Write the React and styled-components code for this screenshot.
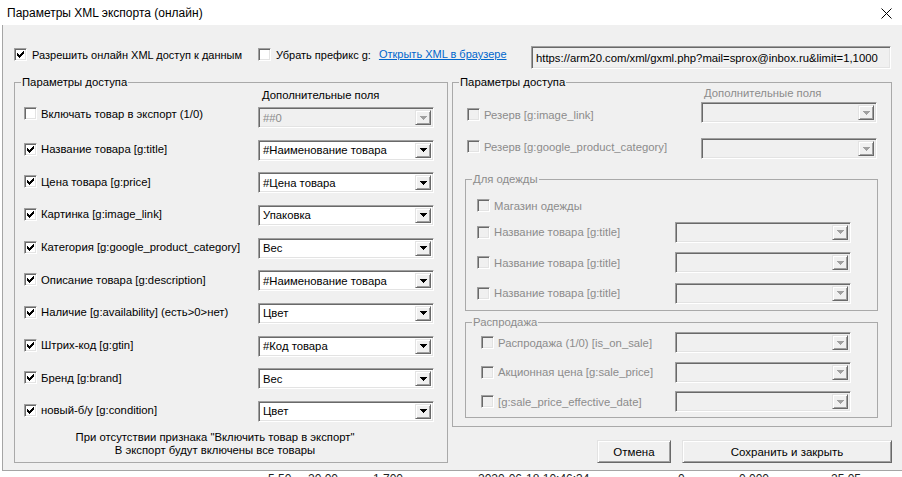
import React from "react";
import styled, { createGlobalStyle } from "styled-components";

const GlobalStyle = createGlobalStyle`
  html, body {
    margin: 0;
    padding: 0;
    background: #fff;
  }
  body {
    font-family: "Liberation Sans", "DejaVu Sans", sans-serif;
  }
`;

const Screen = styled.div`
  width: 902px;
  height: 477px;
  overflow: hidden;
  background: #fff;
`;

const TitleBar = styled.div`
  height: 25px;
  display: flex;
  align-items: center;
  justify-content: space-between;
  padding: 0 10px 0 7px;
  background: #fff;
  font-size: 12px;
  color: #000;
`;

const CloseIcon = styled.svg`
  width: 11px;
  height: 11px;
  margin-top: 2px;
`;

const Client = styled.div`
  box-sizing: border-box;
  height: 446px;
  margin-left: 2px;
  background: #f0f0f0;
  border-left: 1px solid #a5a5a5;
  border-bottom: 1px solid #a5a5a5;
  display: flex;
  flex-direction: column;
`;

const TopRow = styled.div`
  display: flex;
  align-items: flex-start;
  height: 22px;
  margin-top: 21px;
  padding-left: 11px;
  font-size: 11px;
`;

const TopCheck = styled.label`
  display: flex;
  align-items: center;
  gap: 5px;
  width: ${(p) => (p.$width ? `${p.$width}px` : "auto")};
  margin-top: 2px;
  height: 13px;
  white-space: nowrap;
`;

const Link = styled.a`
  color: #0066cc;
  text-decoration: underline;
  margin-left: ${(p) => p.$gap}px;
  margin-top: 2px;
  line-height: 13px;
  white-space: nowrap;
`;

const UrlField = styled.div`
  box-sizing: border-box;
  width: 360px;
  height: 23px;
  margin-left: auto;
  margin-right: 11px;
  display: flex;
  align-items: center;
  padding-left: 4px;
  background: #f0f0f0;
  border: 1px solid;
  border-color: #a0a0a0 #fff #fff #a0a0a0;
  box-shadow: inset 1px 1px 0 #696969, inset -1px -1px 0 #e3e3e3;
  font-size: 11.3px;
  white-space: nowrap;
  overflow: hidden;
`;

const Panels = styled.div`
  display: flex;
  margin-top: 8px;
  padding-left: 11px;
  gap: 4px;
  font-size: 11.3px;
`;

const Group = styled.fieldset`
  box-sizing: border-box;
  margin: 0;
  margin-left: ${(p) => p.$indent || 0}px;
  margin-top: ${(p) => p.$top || 0}px;
  padding: 0;
  width: ${(p) => p.$width}px;
  height: ${(p) => p.$height}px;
  border: 1px solid #a9a9a9;
  min-width: 0;
`;

const Legend = styled.legend`
  margin-left: 6px;
  padding: 0 1px;
  line-height: 13px;
  font-size: 11.3px;
  color: ${(p) => (p.$disabled ? "#8c8c8c" : "#000")};
`;

const ColumnHeader = styled.div`
  padding-left: ${(p) => p.$indent}px;
  margin-top: ${(p) => p.$top || 0}px;
  line-height: 13px;
  color: ${(p) => (p.$disabled ? "#8c8c8c" : "#000")};
`;

const RowList = styled.div`
  display: flex;
  flex-direction: column;
  gap: ${(p) => p.$gap}px;
  margin-top: ${(p) => p.$top}px;
  padding-left: ${(p) => p.$indent}px;
`;

const Row = styled.div`
  display: flex;
  align-items: flex-start;
  height: ${(p) => p.$height || 21}px;
`;

const CheckLabel = styled.label`
  display: flex;
  align-items: center;
  gap: 4px;
  width: ${(p) => (p.$width ? `${p.$width}px` : "auto")};
  height: 13px;
  margin-top: ${(p) => p.$top || 0}px;
  white-space: nowrap;
  color: ${(p) => (p.$disabled ? "#8c8c8c" : "#000")};
`;

const Box = styled.span`
  box-sizing: border-box;
  flex: none;
  width: 13px;
  height: 13px;
  display: flex;
  align-items: center;
  justify-content: center;
  background: ${(p) => (p.$disabled ? "#f0f0f0" : "#fff")};
  border: 1px solid;
  border-color: #a0a0a0 #fff #fff #a0a0a0;
  box-shadow: inset 1px 1px 0 #696969, inset -1px -1px 0 #e3e3e3;
`;

const ComboBox = styled.div`
  box-sizing: border-box;
  flex: none;
  width: 176px;
  height: 21px;
  display: flex;
  align-items: stretch;
  padding: 2px;
  background: ${(p) => (p.$disabled ? "#f0f0f0" : "#fff")};
  border: 1px solid;
  border-color: #a0a0a0 #fff #fff #a0a0a0;
  box-shadow: inset 1px 1px 0 #696969, inset -1px -1px 0 #e3e3e3;
`;

const ComboText = styled.span`
  flex: 1;
  display: flex;
  align-items: center;
  padding-left: 2px;
  white-space: nowrap;
  overflow: hidden;
  color: ${(p) => (p.$disabled ? "#8c8c8c" : "#000")};
`;

const DropButton = styled.span`
  box-sizing: border-box;
  width: 16px;
  display: flex;
  align-items: center;
  justify-content: center;
  background: #f0f0f0;
  border: 1px solid;
  border-color: #e3e3e3 #696969 #696969 #e3e3e3;
  box-shadow: inset 1px 1px 0 #fff, inset -1px -1px 0 #a0a0a0;
`;

const Note = styled.div`
  width: 400px;
  margin-top: 9px;
  text-align: center;
  line-height: 13px;
`;

const RightColumn = styled.div`
  display: flex;
  flex-direction: column;
`;

const ButtonRow = styled.div`
  display: flex;
  justify-content: flex-end;
  gap: 11px;
  margin-top: 13px;
`;

const Button = styled.button`
  box-sizing: border-box;
  width: ${(p) => p.$width}px;
  height: 23px;
  padding: 0;
  font-family: inherit;
  font-size: 11.5px;
  color: #000;
  background: #f0f0f0;
  border: 1px solid;
  border-color: #e3e3e3 #696969 #696969 #e3e3e3;
  box-shadow: inset 1px 1px 0 #fff, inset -1px -1px 0 #a0a0a0;
`;

const Backdrop = styled.div`
  height: 6px;
  overflow: hidden;
  display: grid;
  grid-template-columns: 268px 40px 65px 105px 200px 61px 92px auto;
  font-size: 12px;
  line-height: 14px;
  color: #222;
  padding-top: 1px;
`;

const CHECK_PIXELS = [
  [6, 0], [5, 1], [6, 1], [0, 2], [4, 2], [5, 2], [6, 2],
  [0, 3], [1, 3], [3, 3], [4, 3], [5, 3],
  [0, 4], [1, 4], [2, 4], [3, 4], [4, 4],
  [1, 5], [2, 5], [3, 5], [2, 6],
];

function CheckBox({ checked, disabled }) {
  return (
    <Box $disabled={disabled}>
      {checked && (
        <svg width="7" height="7" viewBox="0 0 7 7" shapeRendering="crispEdges">
          {CHECK_PIXELS.map(([x, y]) => (
            <rect key={`${x}-${y}`} x={x} y={y} width="1" height="1" fill="#000" />
          ))}
        </svg>
      )}
    </Box>
  );
}

function Combo({ value, disabled }) {
  return (
    <ComboBox $disabled={disabled}>
      <ComboText $disabled={disabled}>{value}</ComboText>
      <DropButton>
        <svg width="7" height="4" viewBox="0 0 7 4" shapeRendering="crispEdges">
          <polygon points="0,0 7,0 3.5,4" fill={disabled ? "#a0a0a0" : "#000"} />
        </svg>
      </DropButton>
    </ComboBox>
  );
}

function FieldRow({ label, checked, value, disabled, labelWidth, checkTop, combo = true, height }) {
  return (
    <Row $height={height}>
      <CheckLabel $width={labelWidth} $top={checkTop} $disabled={disabled}>
        <CheckBox checked={checked} disabled={disabled} />
        {label}
      </CheckLabel>
      {combo && <Combo value={value} disabled={disabled} />}
    </Row>
  );
}

const accessFields = [
  { label: "Включать товар в экспорт (1/0)", checked: false, value: "##0", comboDisabled: true },
  { label: "Название товара [g:title]", checked: true, value: "#Наименование товара" },
  { label: "Цена товара [g:price]", checked: true, value: "#Цена товара" },
  { label: "Картинка [g:image_link]", checked: true, value: "Упаковка" },
  { label: "Категория [g:google_product_category]", checked: true, value: "Вес" },
  { label: "Описание товара [g:description]", checked: true, value: "#Наименование товара" },
  { label: "Наличие [g:availability] (есть>0>нет)", checked: true, value: "Цвет" },
  { label: "Штрих-код [g:gtin]", checked: true, value: "#Код товара" },
  { label: "Бренд [g:brand]", checked: true, value: "Вес" },
  { label: "новый-б/у [g:condition]", checked: true, value: "Цвет" },
];

const reserveFields = ["Резерв [g:image_link]", "Резерв [g:google_product_category]"];
const clothesFields = ["Название товара [g:title]", "Название товара [g:title]", "Название товара [g:title]"];
const saleFields = ["Распродажа (1/0) [is_on_sale]", "Акционная цена [g:sale_price]", "[g:sale_price_effective_date]"];

export default function App() {
  return (
    <>
      <GlobalStyle />
      <Screen>
        <TitleBar>
          <span>Параметры XML экспорта (онлайн)</span>
          <CloseIcon viewBox="0 0 11 11">
            <path d="M0.5 0.5 L10.5 10.5 M10.5 0.5 L0.5 10.5" stroke="#000" strokeWidth="1" fill="none" />
          </CloseIcon>
        </TitleBar>

        <Client>
          <TopRow>
            <TopCheck $width={244}>
              <CheckBox checked />
              Разрешить онлайн XML доступ к данным
            </TopCheck>
            <TopCheck>
              <CheckBox />
              Убрать префикс g:
            </TopCheck>
            <Link href="#" $gap={8}>Открыть XML в браузере</Link>
            <UrlField>https://arm20.com/xml/gxml.php?mail=sprox@inbox.ru&amp;limit=1,1000</UrlField>
          </TopRow>

          <Panels>
            <Group $width={434} $height={387}>
              <Legend>Параметры доступа</Legend>
              <ColumnHeader $indent={247}>Дополнительные поля</ColumnHeader>
              <RowList $top={5} $gap={11.67} $indent={9}>
                {accessFields.map((f, i) => (
                  <Row key={i}>
                    <CheckLabel $width={234} $top={i === 0 ? 0 : 3}>
                      <CheckBox checked={f.checked} />
                      {f.label}
                    </CheckLabel>
                    <Combo value={f.value} disabled={f.comboDisabled} />
                  </Row>
                ))}
              </RowList>
              <Note>
                При отсутствии признака "Включить товар в экспорт"
                <br />
                В экспорт будут включены все товары
              </Note>
            </Group>

            <RightColumn>
              <Group $width={440} $height={351}>
                <Legend>Параметры доступа</Legend>
                <ColumnHeader $indent={251} $top={-2} $disabled>Дополнительные поля</ColumnHeader>
                <RowList $top={2} $gap={15} $indent={14}>
                  {reserveFields.map((label, i) => (
                    <FieldRow key={i} label={label} disabled labelWidth={234} checkTop={i === 0 ? 6 : 2} />
                  ))}
                </RowList>

                <Group $indent={12} $top={14} $width={413} $height={138}>
                  <Legend $disabled>Для одежды</Legend>
                  <RowList $top={13} $gap={9.5} $indent={11}>
                    <FieldRow label="Магазин одежды" disabled combo={false} height={13} />
                    {clothesFields.map((label, i) => (
                      <FieldRow key={i} label={label} disabled labelWidth={198} checkTop={4} />
                    ))}
                  </RowList>
                </Group>

                <Group $indent={12} $top={5} $width={413} $height={102}>
                  <Legend $disabled>Распродажа</Legend>
                  <RowList $top={3} $gap={8.5} $indent={15}>
                    {saleFields.map((label, i) => (
                      <FieldRow key={i} label={label} disabled labelWidth={194} checkTop={4} />
                    ))}
                  </RowList>
                </Group>
              </Group>

              <ButtonRow>
                <Button $width={74}>Отмена</Button>
                <Button $width={210}>Сохранить и закрыть</Button>
              </ButtonRow>
            </RightColumn>
          </Panels>
        </Client>

        <Backdrop>
          <span />
          <span>5,50</span>
          <span>20,00</span>
          <span>1,700</span>
          <span>2020-06-18 10:46:34</span>
          <span>0</span>
          <span>0,000</span>
          <span>25,05</span>
        </Backdrop>
      </Screen>
    </>
  );
}
